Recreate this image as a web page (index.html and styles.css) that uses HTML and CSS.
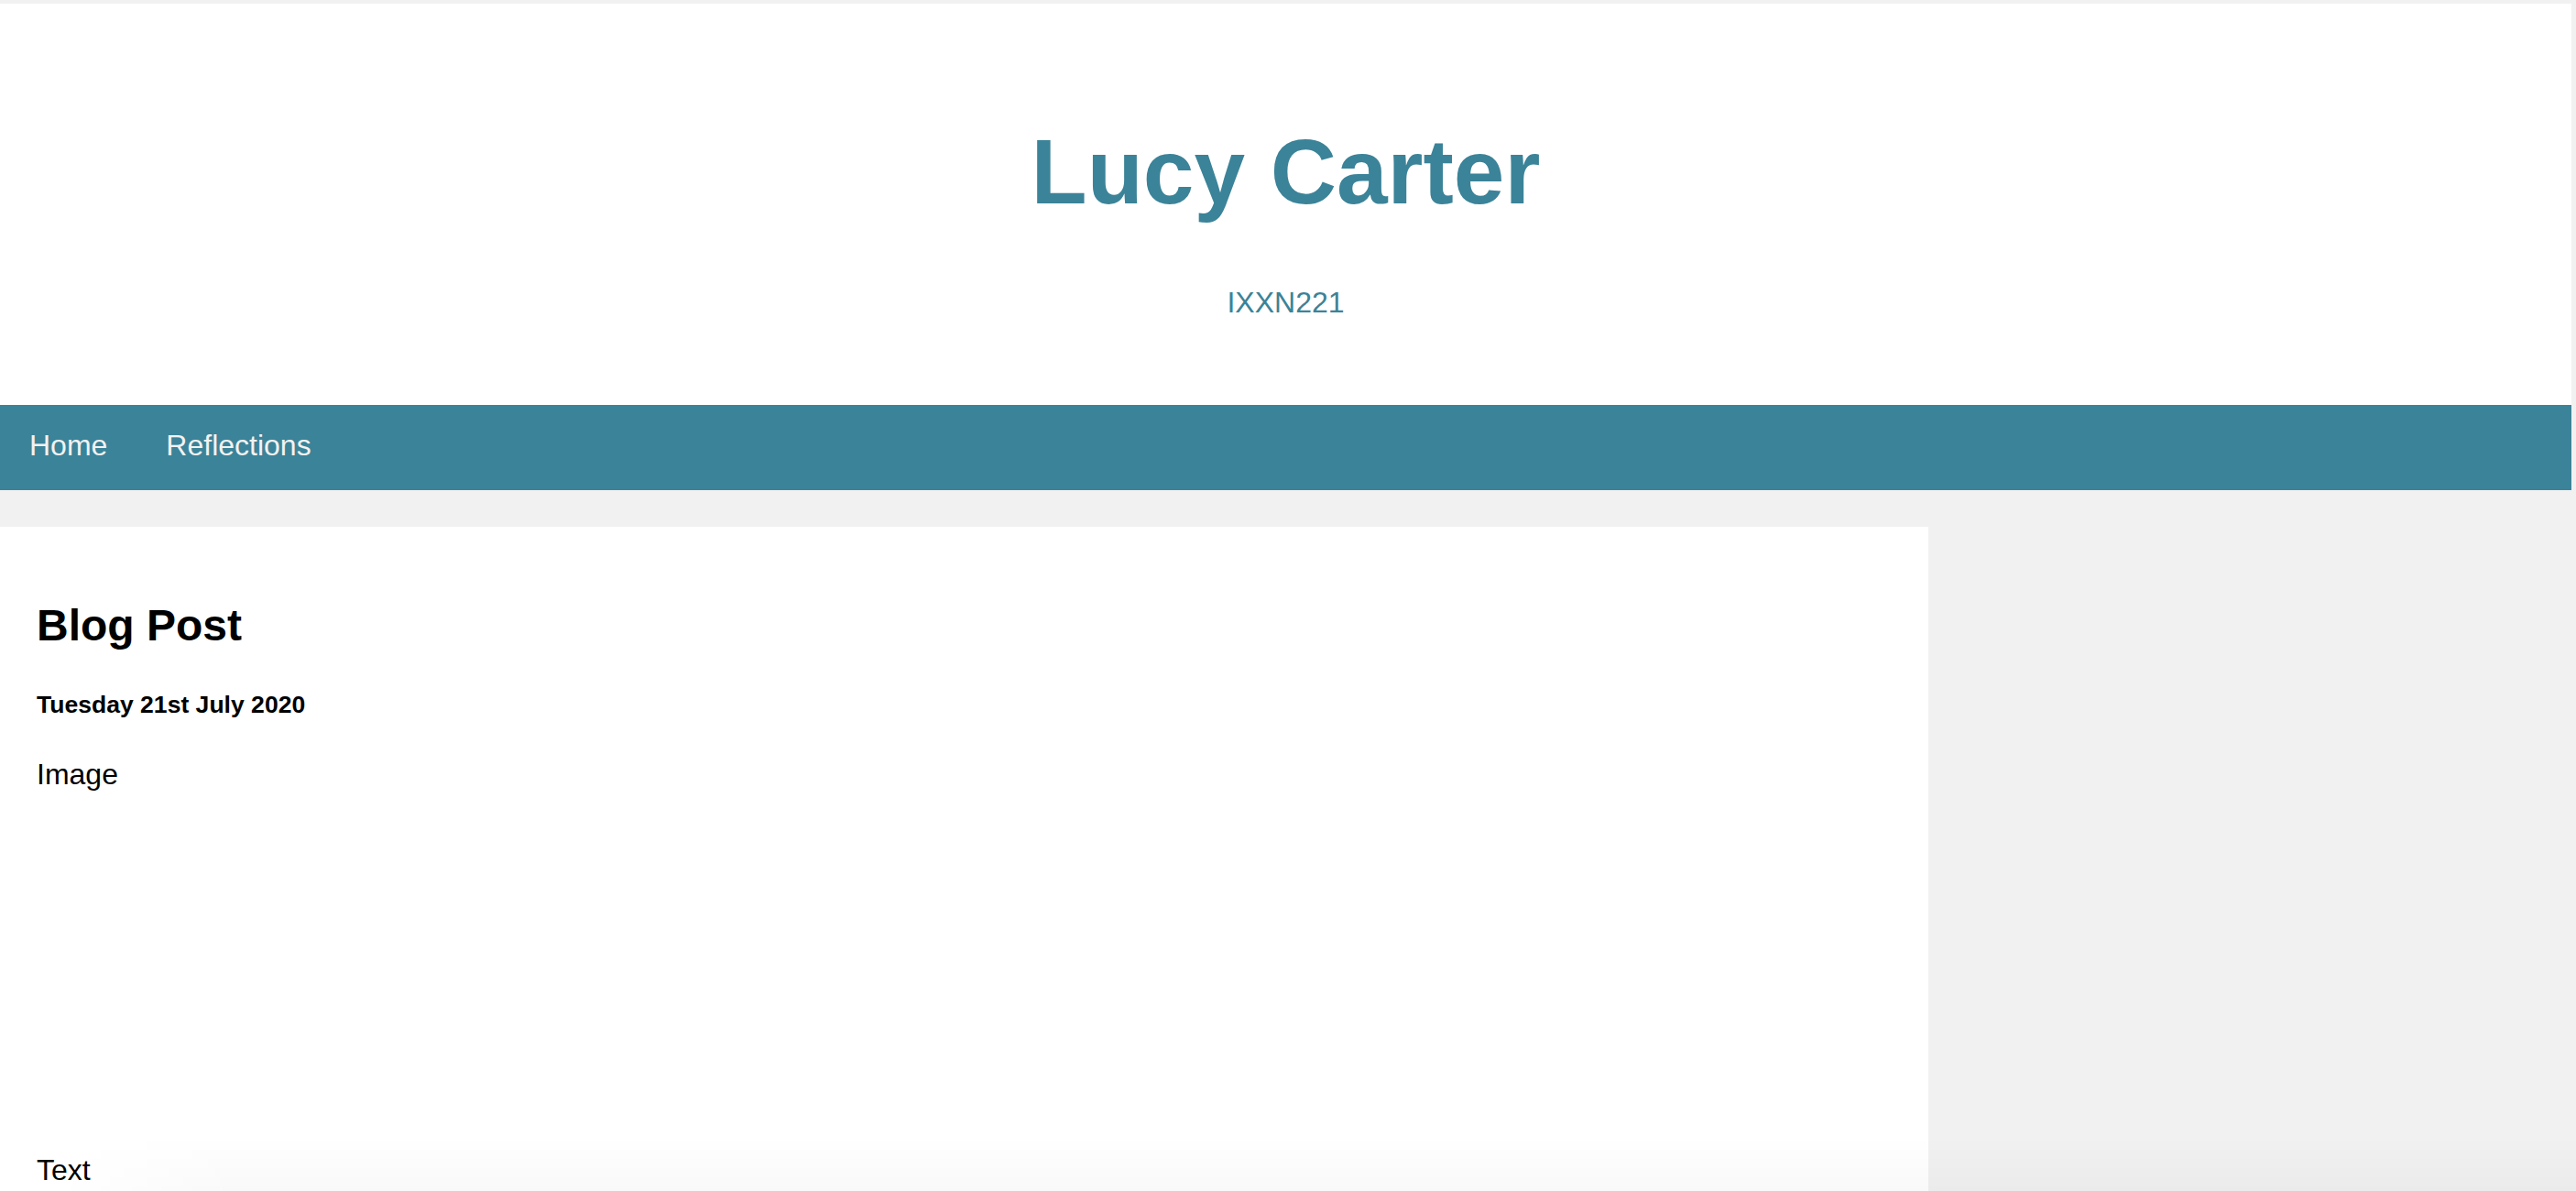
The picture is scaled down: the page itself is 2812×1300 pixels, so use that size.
FILE: index.html
```html
<!DOCTYPE html>
<html lang="en">
<head>
<meta charset="utf-8">
<title>Lucy Carter</title>
<link rel="stylesheet" href="styles.css">
</head>
<body>
  <div class="page">
    <header class="header">
      <h1 class="title">Lucy Carter</h1>
      <p class="subtitle">IXXN221</p>
    </header>
    <nav class="topnav">
      <a href="#" class="navlink">Home</a>
      <a href="#" class="navlink">Reflections</a>
    </nav>
    <div class="row">
      <main class="leftcolumn">
        <article class="card">
          <h2 class="post-title">Blog Post</h2>
          <h5 class="post-date">Tuesday 21st July 2020</h5>
          <div class="fakeimg">Image</div>
          <p class="post-text">Text</p>
        </article>
      </main>
      <aside class="rightcolumn"></aside>
    </div>
  </div>
  <div class="bottom-shade"></div>
</body>
</html>
```
FILE: styles.css
```css
html, body {
  margin: 0;
  padding: 0;
}

body {
  background: #f1f1f1;
  font-family: "Liberation Sans", Arial, Helvetica, sans-serif;
  font-size: 32px;
  color: #000;
  padding: 4px 5px 0 0;
  overflow: hidden;
  height: 1296px;
}

.page {
  display: flex;
  flex-direction: column;
}

.header {
  background: #ffffff;
  padding: 60px;
  text-align: center;
  color: #3b8398;
}

.title {
  font-size: 100px;
  font-weight: bold;
  margin: 66px 0 67px;
  line-height: normal;
}

.subtitle {
  font-size: 32px;
  margin: 32px 0 33px;
  line-height: normal;
}

.topnav {
  display: flex;
  background: #3b8398;
}

.navlink {
  display: block;
  color: #f2f2f2;
  text-decoration: none;
  font-size: 32px;
  line-height: normal;
  padding: 26px 32px 30px;
}

.row {
  display: flex;
  align-items: flex-start;
}

.leftcolumn {
  width: 75%;
}

.rightcolumn {
  width: 25%;
}

.card {
  background: #ffffff;
  padding: 40px;
  margin-top: 40px;
}

.post-title {
  font-size: 48px;
  font-weight: bold;
  margin: 39.84px 0;
  line-height: normal;
}

.post-date {
  font-size: 26.56px;
  font-weight: bold;
  margin: 44.36px 0 42px;
  line-height: normal;
}

.fakeimg {
  height: 400px;
  background: #ffffff;
  font-size: 32px;
  line-height: normal;
}

.post-text {
  font-size: 32px;
  margin: 32px 0;
  line-height: normal;
}

.bottom-shade {
  position: fixed;
  left: 60px;
  right: 0;
  bottom: 0;
  height: 60px;
  pointer-events: none;
  background: linear-gradient(to bottom, rgba(0,0,0,0) 0%, rgba(0,0,0,0.025) 100%);
  -webkit-mask-image: linear-gradient(to right, transparent 0, #000 200px);
  mask-image: linear-gradient(to right, transparent 0, #000 200px);
}
```
